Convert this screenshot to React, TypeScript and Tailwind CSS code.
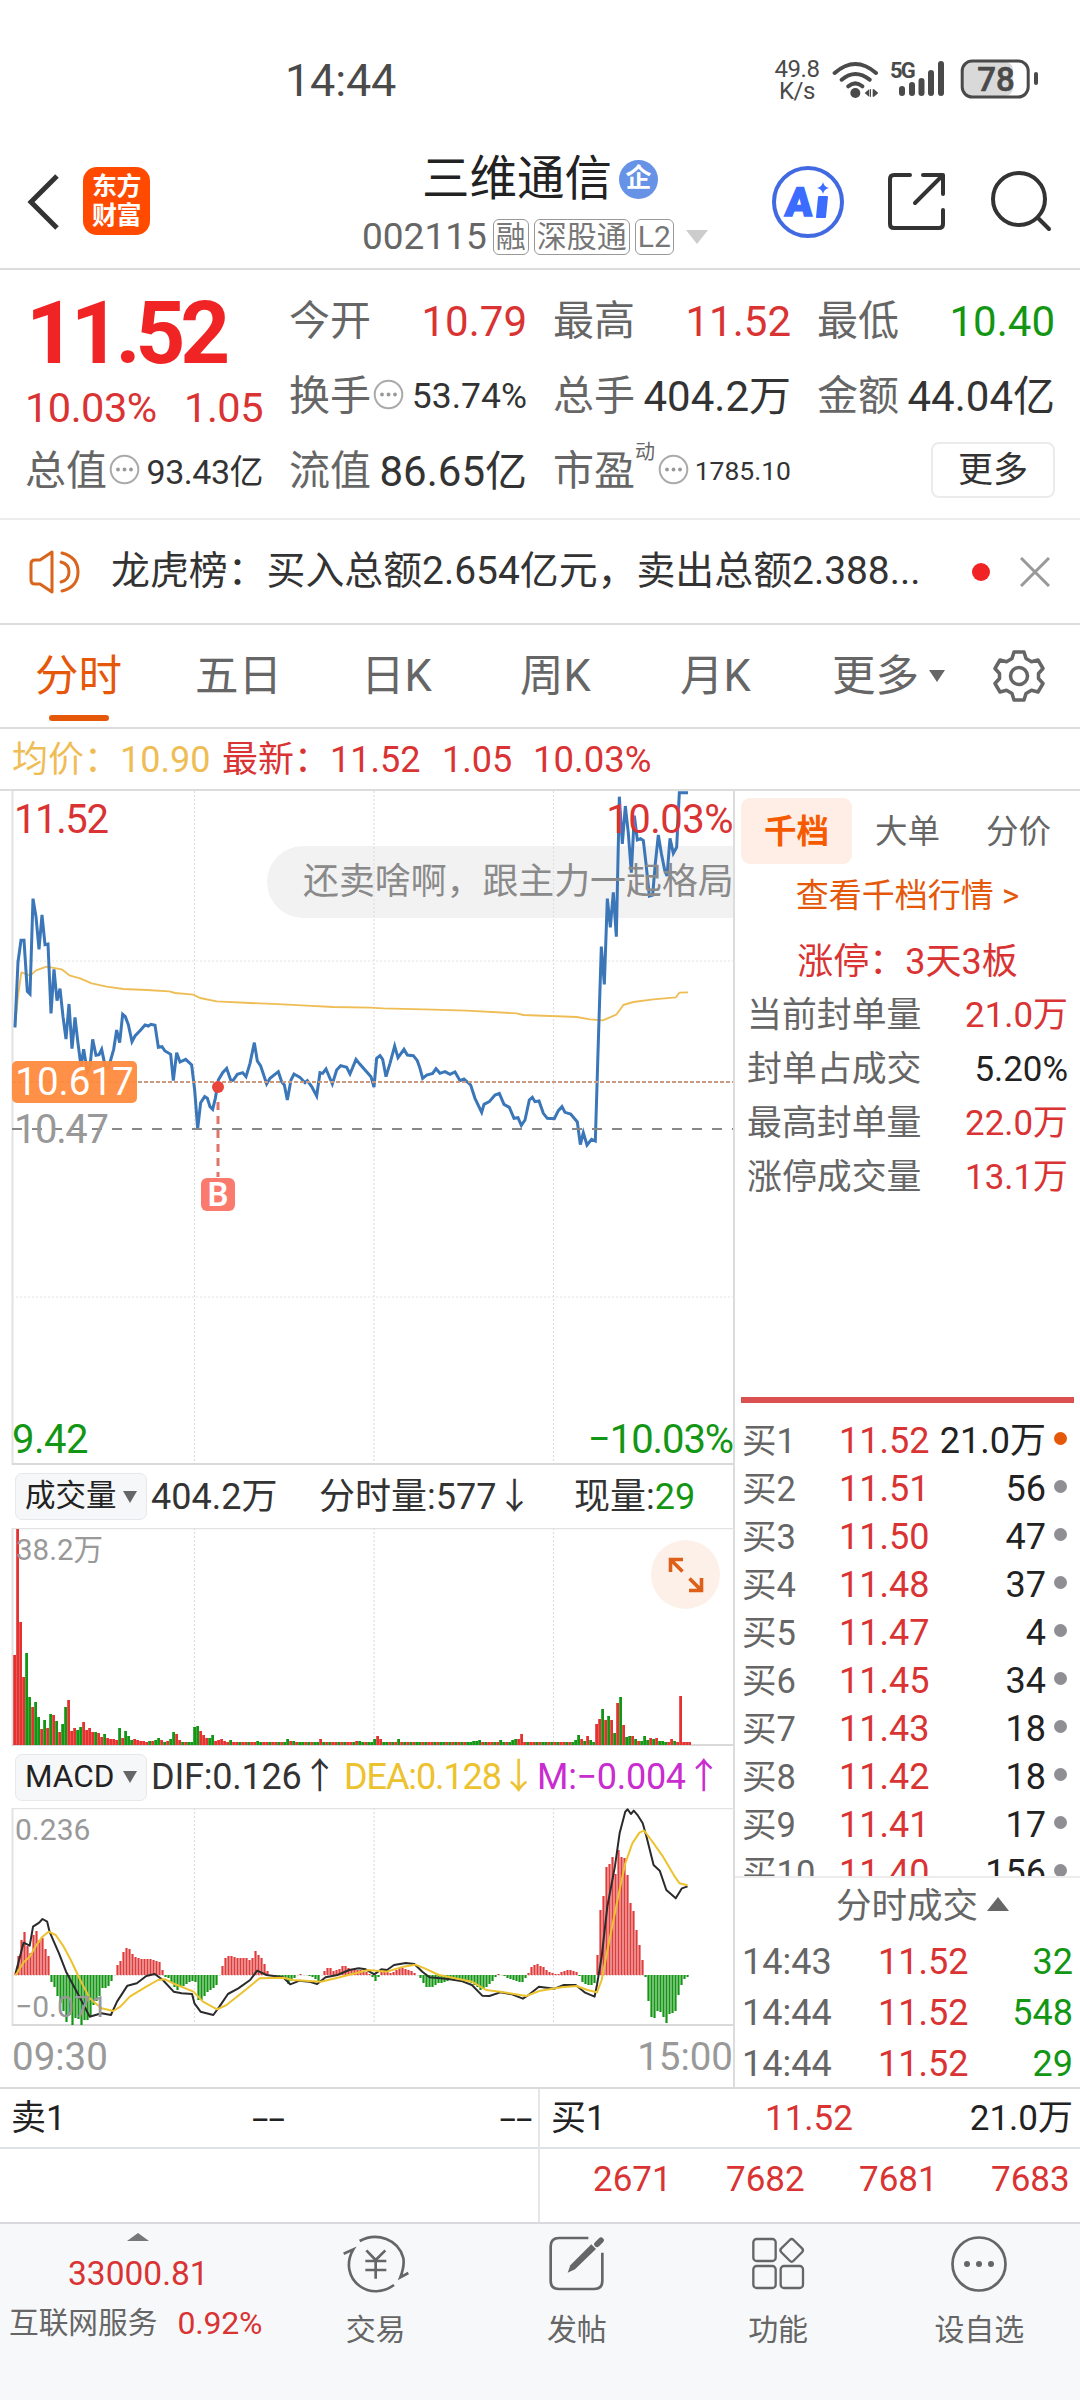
import React from 'react';

const PRICE_LINE =
  '45,772 54,576 63,511 72,511 82,664 90,672 99,386 108,440 117,538 126,435 135,524 144,522 153,730 162,598 171,692 180,656 189,740 198,807 207,702 216,836 225,742 234,820 243,888 251,838 262,905 270,890 278,808 288,856 297,854 305,838 317,896 325,893 332,870 341,838 350,780 359,818 368,733 376,740 385,764 396,815 405,798 420,782 435,765 445,768 453,763 465,766 475,832 486,830 495,843 512,853 520,932 530,848 540,876 557,868 575,885 584,960 593,1076 602,998 614,980 622,985 630,1010 638,1018 646,985 655,930 668,908 680,895 693,933 700,930 712,913 728,908 738,920 750,880 763,818 772,873 782,888 800,942 810,925 835,905 845,935 853,945 862,990 873,930 882,912 900,922 915,938 922,932 935,950 950,978 960,908 968,910 978,897 997,942 1010,900 1022,887 1040,892 1050,912 1068,868 1080,883 1113,920 1122,951 1130,865 1140,857 1148,868 1158,920 1170,880 1184,828 1194,863 1212,838 1222,855 1240,857 1252,872 1260,895 1268,925 1280,915 1298,910 1308,896 1320,910 1335,905 1350,913 1365,906 1380,932 1392,927 1412,945 1425,985 1445,1027 1452,1003 1468,995 1485,975 1498,970 1512,1003 1528,1012 1542,1045 1554,1043 1564,1066 1575,1050 1588,990 1597,982 1605,995 1617,993 1630,1030 1642,1045 1663,1046 1675,1022 1686,1010 1695,1027 1712,1032 1732,1056 1741,1124 1750,1088 1761,1125 1775,1108 1786,1113 1795,815 1804,530 1813,643 1822,386 1831,472 1840,367 1849,500 1858,80 1867,222 1876,108 1885,190 1894,308 1903,137 1912,210 1922,206 1930,212 1938,280 1948,378 1958,375 1966,280 1975,195 1984,250 1994,300 2001,318 2010,205 2020,250 2030,232 2038,68 2064,68';

const AVG_LINE =
  '45,772 54,680 64,607 85,615 95,613 108,601 140,590 185,598 208,616 240,625 275,640 320,650 370,657 440,660 508,664 525,669 580,674 600,684 650,694 750,699 850,703 920,707 1000,711 1110,713 1150,715 1300,719 1400,722 1550,730 1570,735 1730,741 1770,748 1808,751 1830,742 1850,733 1870,705 1900,696 1960,688 2028,682 2038,668 2064,667';

const DIF_LINE =
  '33,700 50,608 63,617 70,560 83,548 90,537 100,545 105,575 112,598 125,640 140,695 155,735 170,775 190,830 215,820 235,825 248,785 270,737 290,730 310,708 328,702 345,720 368,755 385,760 407,762 412,790 425,815 452,825 465,800 483,762 505,745 530,720 545,692 565,705 600,712 615,733 635,722 655,725 672,732 690,712 715,705 740,690 760,685 775,688 793,703 808,688 820,690 835,675 860,669 878,672 895,695 910,712 950,717 980,724 1000,735 1022,767 1037,768 1060,757 1085,763 1108,776 1120,765 1142,740 1175,746 1195,735 1220,735 1240,758 1260,770 1265,735 1275,650 1287,500 1303,380 1313,280 1325,215 1330,208 1337,222 1343,212 1352,227 1362,250 1370,290 1385,375 1398,392 1412,450 1432,475 1445,445 1457,439';

const DEA_LINE =
  '33,706 50,667 63,650 75,620 90,590 103,575 118,585 135,620 150,660 170,720 190,775 215,805 240,813 255,800 275,770 310,740 335,720 350,718 370,732 410,755 430,785 460,808 480,795 520,750 550,715 600,713 620,720 680,725 720,712 780,690 820,695 855,680 880,674 900,685 930,705 975,718 1000,725 1030,750 1060,755 1115,768 1145,752 1190,742 1222,738 1245,750 1265,757 1275,720 1290,610 1310,470 1325,370 1340,310 1355,278 1365,272 1380,300 1405,350 1430,410 1440,430 1457,436';

// minute volume bars: positive is an up minute, negative a down minute
const VOLUME: number[] = [
  90, 216, 123, 68, -92, -48, 38, -43, -28, 16, -25, 17, -31, 30, -24, 13, -21, -38, 45, 14, 17, -15, -18, 23, 15,
  17, 13, -13, 12, 8, -11, 7, 6, 6, 5, -17, 7, -14, -9, -5, 6, 5, 4, 4, 3, -4, 4, -5, -7, 5, -3, 4, -6, -13, 11, 5,
  -3, 3, -3, -3, -18, -19, 14, 10, 7, -7, -10, 4, 5, 6, 4, 3, -5, 3, 3, -3, 3, 3, -3, 3, 3, -4, -3, 3, 3, -3, 3, 3,
  -3, 3, -3, -6, 4, -4, 3, -3, -3, 3, -3, 3, -3, -3, 6, -3, 3, -3, 3, 3, -3, 3, -3, 3, 3, -3, 4, -4, -3, 3, -3, -3,
  -6, 9, 6, -3, -3, 3, -3, 3, -6, 3, -3, 3, -3, 3, -3, -3, 3, -3, 3, 3, -3, 3, -3, -3, 3, -3, 3, -3, 3, -3, 3, -3,
  -3, -4, -4, -5, 3, -3, 3, 3, -3, 3, -5, -3, 3, -3, -5, -6, 6, 11, 3, -3, 3, 3, -3, 3, -3, -3, 3, -3, 3, -3, 3, 3,
  -3, 3, -3, -5, -10, 6, -4, 9, -5, -3, 21, 26, -36, 25, -29, 25, -12, 42, -48, 20, -8, -9, 9, -6, 4, -4, -9, -5, 7,
  -6, 7, -4, -4, -3, 3, 6, -4, 3, 49, 3, 3, 3,
];

const MACD: number[] = [
  2, 19, 35, 43, 29, 22, 40, 44, 35, 37, 26, 19, -7, -12, -21, -28, -36, -47, -40, -50, -43, -44, -50, -45, -45, -42,
  -30, -26, -21, -13, -13, -11, -6, 0, 10, 14, 23, 27, 26, 21, 18, 17, 16, 16, 16, 16, 15, 14, 13, 5, -2, -3, -8,
  -12, -15, -12, -11, -9, -7, -6, -7, -25, -25, -21, -17, -15, -13, -10, 0, 9, 17, 19, 19, 18, 17, 17, 17, 17, 15,
  17, 24, 20, 17, 11, 4, 0, -1, -1, -2, -3, -5, -9, -6, -3, 0, 1, 0, 0, -1, -2, -4, -6, 0, 4, 7, 7, 4, 5, 6, 9, 9,
  7, 6, 6, 5, 5, 4, 3, 1, -2, -6, -2, 3, 5, 3, 2, 3, 5, 7, 7, 6, 5, 4, 2, 0, -3, -8, -12, -12, -12, -10, -8, -8, -7,
  -6, -5, -4, -4, -4, -4, -5, -6, -8, -10, -12, -15, -14, -12, -9, -6, -2, 1, 0, -1, -3, -4, -5, -6, -7, -7, -3, 2, 8,
  10, 11, 9, 8, 5, 3, 2, 1, 1, 3, 4, 5, 5, 4, 3, -1, -7, -9, -10, -10, -8, 20, 65, 79, 108, 111, 118, 101, 125, 118,
  117, 100, 72, 64, 45, 30, 15, -2, -26, -42, -43, -36, -37, -42, -48, -39, -38, -36, -20, -10, -4, -2,
];

const BIDS = [
  ['买1', '11.52', '21.0万'],
  ['买2', '11.51', '56'],
  ['买3', '11.50', '47'],
  ['买4', '11.48', '37'],
  ['买5', '11.47', '4'],
  ['买6', '11.45', '34'],
  ['买7', '11.43', '18'],
  ['买8', '11.42', '18'],
  ['买9', '11.41', '17'],
  ['买10', '11.40', '156'],
];

const TRADES = [
  ['14:43', '11.52', '32'],
  ['14:44', '11.52', '548'],
  ['14:44', '11.52', '29'],
];

const SEALS = [
  { label: '当前封单量', value: '21.0万', red: true },
  { label: '封单占成交', value: '5.20%', red: false },
  { label: '最高封单量', value: '22.0万', red: true },
  { label: '涨停成交量', value: '13.1万', red: true },
];

const StatusBar = () => (
  <div className="h-[125px] flex-none flex items-start text-[#4a4a4a]">
    <span className="ml-[285px] mt-[56px] text-[45px] leading-[50px] w-[121px] tracking-[-0.2px]">14:44</span>
    <div className="ml-[366px] mt-[58px] w-[50px] text-center text-[24px] leading-[22px] tracking-[-0.4px]">
      49.8
      <br />
      K/s
    </div>
    <svg className="mt-[59px] ml-[9px]" width="50" height="42" viewBox="0 0 150 126" fill="none" stroke="#4a4a4a" strokeWidth="12" strokeLinecap="round">
      <path d="M11 42 Q73 -12 135 42M32 62 Q73 28 116 62M52 82 Q73 64 94 82" />
      <circle cx="73" cy="102" r="15" fill="#4a4a4a" stroke="none" />
      <path d="M101 102l13-11v22zM142 102l-13-11v22z" fill="#4a4a4a" stroke="none" />
      <path d="M118 92v20M127 92v20" strokeWidth="4" />
    </svg>
    <div className="relative ml-[8px] mt-[58px] w-[56px] h-[42px]">
      <span className="absolute left-[1px] top-0 text-[22px] leading-[25px] font-bold tracking-[-1.800px]">5G</span>
      <svg width="56" height="42" viewBox="0 0 56 42" stroke="#4a4a4a" strokeWidth="6" strokeLinecap="round">
        <path d="M13 31v4M23 27v8M32.500 23v12M42 15v20M52 6v29" />
      </svg>
    </div>
    <svg className="ml-[14px] mt-[58px]" width="82" height="42" viewBox="0 0 82 42" fill="none">
      <rect x="4" y="4" width="50" height="34" rx="8" fill="#d9d9d9" />
      <rect x="3.200" y="3" width="66" height="36" rx="10" stroke="#4a4a4a" strokeWidth="3" />
      <path d="M77 16v9" stroke="#4a4a4a" strokeWidth="4" strokeLinecap="round" />
      <text x="37" y="32.500" fontSize="33" fontWeight="500" textAnchor="middle" fill="#4a4a4a" stroke="#4a4a4a" strokeWidth=".6">78</text>
    </svg>
  </div>
);

const Tag = ({ children }: { children: React.ReactNode }) => (
  <span className="h-[36px] px-[2px] border-[1.5px] border-[#999] rounded-[6px] text-[30px] leading-[33px] text-[#777] whitespace-nowrap">{children}</span>
);

const Header = () => (
  <header className="h-[145px] flex-none border-b-2 border-[#dcdcdc] flex items-center relative">
    <svg className="ml-[25px] mt-[10px]" width="36" height="60" viewBox="0 0 36 60" fill="none" stroke="#333" strokeWidth="5">
      <path d="M32 4L6 30l26 26" />
    </svg>
    <div className="ml-[22px] mt-[9px] w-[67px] h-[68px] rounded-[14px] bg-[#ff4a00] text-white font-bold text-[25px] leading-[29px] text-center pt-[5px] tracking-[-0.5px]">
      东方
      <br />
      财富
    </div>
    <div className="ml-[212px] mt-[15px] w-[352px] flex flex-col items-start">
      <div className="ml-[60px] flex items-center h-[56px]">
        <span className="text-[47.500px] leading-[56px] text-[#222]">三维通信</span>
        <span className="ml-[7px] w-[39px] h-[39px] rounded-full bg-[#6793e6] text-white text-[26px] leading-[37px] text-center font-bold">企</span>
      </div>
      <div className="flex items-center mt-[10px] gap-[5px]">
        <span className="text-[37px] leading-[40px] text-[#666] mr-[1px]">002115</span>
        <Tag>融</Tag>
        <Tag>深股通</Tag>
        <Tag>L2</Tag>
        <svg className="ml-[7px]" width="22" height="14" viewBox="0 0 22 14"><path d="M0 0h22L11 14z" fill="#ccc" /></svg>
      </div>
    </div>
    <svg className="ml-[57px] mt-[10px]" width="74" height="74" viewBox="0 0 74 74">
      <circle cx="37" cy="37" r="34" fill="none" stroke="#4169e1" strokeWidth="4" />
      <text x="14" y="51" fontSize="40" fontWeight="900" fill="#3b6cff" stroke="#3b6cff" strokeWidth="1.5" transform="skewX(-4) translate(3 0)">A</text>
      <path d="M48 32h8l-2 20h-8z" fill="#3b6cff" stroke="#3b6cff" strokeWidth="2" strokeLinejoin="round" />
      <path d="M52 17q1 5 6 6q-5 1-6 6q-1-5-6-6q5-1 6-6z" fill="#3b6cff" />
    </svg>
    <svg className="ml-[42px] mt-[10px]" width="60" height="60" viewBox="0 0 60 60" fill="none" stroke="#333" strokeWidth="4" strokeLinecap="round" strokeLinejoin="round">
      <path d="M23 3H7Q3 3 3 7V52Q3 56 7 56H52Q56 56 56 52V38M36 3H56V22M55 4L28 31" />
    </svg>
    <svg className="ml-[44px] mt-[9px]" width="62" height="62" viewBox="0 0 62 62" fill="none" stroke="#333" strokeWidth="4" strokeLinecap="round">
      <circle cx="28" cy="29" r="26" />
      <path d="M47 48l11 11" />
    </svg>
  </header>
);

const Dots = () => (
  <svg className="flex-none" width="31" height="31" viewBox="0 0 31 31">
    <circle cx="15.500" cy="15.500" r="13.800" fill="none" stroke="#aaa" strokeWidth="2" />
    <g fill="#999"><circle cx="9" cy="15.500" r="1.900" /><circle cx="15.500" cy="15.500" r="1.900" /><circle cx="22" cy="15.500" r="1.900" /></g>
  </svg>
);

interface StatProps {
  label: string;
  dots?: boolean;
  children: React.ReactNode;
}

const Stat = ({ label, dots, children }: StatProps) => (
  <div className="h-[75px] flex items-center whitespace-nowrap">
    <span className="text-[41px] leading-none text-[#666]">{label}</span>
    {dots && <span className="ml-[2px] mb-[4px]"><Dots /></span>}
    <span className="ml-auto flex items-center">{children}</span>
  </div>
);

const Quote = () => (
  <section className="h-[250px] flex-none border-b-2 border-[#ececec] pl-[25px] pr-[25px] pt-[14px] grid grid-cols-4 gap-x-[26px]">
    <div>
      <div className="h-[98px] pt-[5px] pl-[1px] text-[87px] leading-[88px] font-bold text-[#f02424] tracking-[-5.200px]">11.52</div>
      <div className="h-[52px] flex items-center justify-between text-[41.500px] leading-none text-[#d93333] tracking-[-0.5px]">
        <span>10.03%</span>
        <span>1.05</span>
      </div>
      <Stat label="总值" dots><span className="text-[34px] leading-none text-[#333] tracking-[-0.5px]">93.43亿</span></Stat>
    </div>
    <div>
      <Stat label="今开"><span className="text-[42px] leading-none text-[#d93333]">10.79</span></Stat>
      <Stat label="换手" dots><span className="text-[35.500px] leading-none text-[#333]">53.74%</span></Stat>
      <Stat label="流值"><span className="text-[42px] leading-none text-[#333]">86.65亿</span></Stat>
    </div>
    <div>
      <Stat label="最高"><span className="text-[42px] leading-none text-[#d93333]">11.52</span></Stat>
      <Stat label="总手"><span className="text-[42px] leading-none text-[#333]">404.2万</span></Stat>
      <div className="h-[75px] flex items-center whitespace-nowrap">
        <span className="text-[41px] leading-none text-[#666]">市盈</span>
        <span className="text-[20px] leading-none text-[#666] self-start mt-[8px]">动</span>
        <span className="ml-[3px] mb-[4px]"><Dots /></span>
        <span className="ml-auto text-[26.500px] leading-none text-[#333]">1785.10</span>
      </div>
    </div>
    <div>
      <Stat label="最低"><span className="text-[42px] leading-none text-[#139613]">10.40</span></Stat>
      <Stat label="金额"><span className="text-[42px] leading-none text-[#333]">44.04亿</span></Stat>
      <div className="h-[75px] flex items-center justify-end">
        <button className="w-[124px] h-[56px] mb-[3px] border-2 border-[#ebebeb] rounded-[8px] text-[35px] leading-none text-[#333]">更多</button>
      </div>
    </div>
  </section>
);

const Notice = () => (
  <section className="h-[105px] flex-none border-b-2 border-[#dcdcdc] flex items-center">
    <svg className="ml-[28px]" width="54" height="46" viewBox="0 0 54 46" fill="none" stroke="#d9641c" strokeWidth="3" strokeLinejoin="round" strokeLinecap="round">
      <path d="M24 3L12 11H7Q3 11 3 15V31Q3 35 7 35H12L24 43zM33 13Q41 15 41 23T33 33M34 4Q50 8 50 23T34 42" />
    </svg>
    <span className="ml-[29px] w-[816px] text-[38.900px] leading-none text-[#333] whitespace-nowrap">龙虎榜：买入总额2.654亿元，卖出总额2.388...</span>
    <span className="ml-[45px] w-[18px] h-[18px] rounded-full bg-[#f02424]"></span>
    <svg className="ml-[30px]" width="30" height="30" viewBox="0 0 30 30" stroke="#999" strokeWidth="3">
      <path d="M1 1l28 28M29 1L1 29" />
    </svg>
  </section>
);

const Tabs = () => (
  <nav className="h-[104px] flex-none border-b-2 border-[#dcdcdc] flex items-center text-[43.500px] leading-none text-[#666] pl-[35px]">
    <div className="w-[160px] h-full relative flex items-center pt-[2px] text-[#e5580a]">
      分时
      <span className="absolute left-[14px] top-[90px] w-[60px] h-[6px] rounded-full bg-[#e5580a]"></span>
    </div>
    <span className="w-[166px] pt-[2px]">五日</span>
    <span className="w-[159px] pt-[2px]">日K</span>
    <span className="w-[160px] pt-[2px]">周K</span>
    <span className="w-[152px] pt-[2px]">月K</span>
    <span className="w-[97px] pt-[2px]">更多</span>
    <svg width="16" height="12" viewBox="0 0 16 12"><path d="M0 0h16L8 12z" fill="#666" /></svg>
    <svg className="ml-[48px]" width="52" height="54" viewBox="0 0 52 54" fill="none" stroke="#666" strokeWidth="3.500" strokeLinejoin="round">
      <path d="M21 3H31L33 9.500L38.500 12.700L45 11L50 19.500L45.500 24.500V29.500L50 34.500L45 43L38.500 41.300L33 44.500L31 51H21L19 44.500L13.500 41.300L7 43L2 34.500L6.500 29.500V24.500L2 19.500L7 11L13.500 12.700L19 9.500Z" />
      <circle cx="26" cy="27" r="8.500" />
    </svg>
  </nav>
);

const Grid = ({ height }: { height: number }) => (
  <g stroke="#dedede" strokeWidth="1.200" strokeDasharray="2 2">
    <path d={`M194.500 0V${height}M374 0V${height}M553.500 0V${height}`} />
  </g>
);

const PriceChart = () => (
  <div className="relative h-[674px] overflow-hidden text-[40px] leading-[44px]">
    <svg width="734" height="674" viewBox="0 0 734 674" fill="none">
      <path d="M12.500 0V674" stroke="#e2e2e2" strokeWidth="2" />
      <path d="M12 673H734" stroke="#d9d9d9" strokeWidth="2" />
      <path d="M303 55H734V127H303a36 36 0 0 1 0-72z" fill="#f2f2f2" />
      <Grid height={672} />
      <path d="M12 170H734M12 506H734" stroke="#e4e4e4" strokeWidth="1.200" strokeDasharray="2 2" />
      <g transform="translate(0 -21) scale(.33333)" strokeLinejoin="round">
        <polyline points={AVG_LINE} stroke="#efbd55" strokeWidth="5.500" />
        <polyline points={PRICE_LINE} stroke="#3a76b8" strokeWidth="9" strokeLinejoin="miter" />
      </g>
      <path d="M12 291H734" stroke="#c99a80" strokeWidth="1.800" strokeDasharray="4 2" />
      <path d="M12 338H734" stroke="#888" strokeWidth="2" strokeDasharray="10 10" />
      <circle cx="218" cy="296" r="6" fill="#e8453c" />
      <path d="M218 311V386" stroke="#e07468" strokeWidth="3" strokeDasharray="8 6" />
      <rect x="201" y="387" width="34" height="33" rx="6" fill="#fa7b6d" />
      <text x="218" y="415" fontSize="33" fontWeight="600" textAnchor="middle" fill="#fff">B</text>
    </svg>
    <span className="absolute left-[14px] top-[7px] text-[#d93333] tracking-[-1.400px]">11.52</span>
    <span className="absolute right-0 top-[7px] text-[#d93333] tracking-[-0.5px]">10.03%</span>
    <span className="absolute left-[303px] top-[69px] text-[35.900px] text-[#8a8a8a] whitespace-nowrap">还卖啥啊，跟主力一起格局</span>
    <span className="absolute left-[12px] top-[270px] w-[125px] h-[42px] rounded-[5px] bg-[#ff8a3d]/95 text-center text-[38.500px] leading-[42px] text-white">10.617</span>
    <span className="absolute left-[14px] top-[317px] text-[#999] tracking-[-1.400px]">10.47</span>
    <span className="absolute left-[12px] top-[627px] text-[#139613] tracking-[-0.500px]">9.42</span>
    <span className="absolute right-0 top-[627px] text-[#139613] tracking-[-1.100px]">−10.03%</span>
  </div>
);

const Chip = ({ children }: { children: React.ReactNode }) => (
  <span className="flex-none ml-[15px] mr-[4px] w-[132px] h-[47px] rounded-[7px] border border-[#e6e8ec] bg-[#f6f7f9] flex items-center justify-between pl-[9px] pr-[9px] text-[30.500px] leading-none text-[#222]">
    {children}
    <svg width="14" height="12" viewBox="0 0 14 12"><path d="M0 0h14L7 12z" fill="#666" /></svg>
  </span>
);

const VolumeChart = () => (
  <div className="relative h-[218px] text-[#999]">
    <svg width="734" height="218" viewBox="0 0 734 218" fill="none">
      <path d="M12 .5H734" stroke="#e2e2e2" strokeWidth="1.500" />
      <path d="M12.500 0V218" stroke="#e2e2e2" strokeWidth="2" />
      <path d="M12 217H734" stroke="#d9d9d9" strokeWidth="2" />
      <Grid height={216} />
      {VOLUME.map((v, i) => (
        <rect key={i} x={13.2 + i * 3} y={217 - Math.abs(v)} width="2.8" height={Math.abs(v)} fill={v > 0 ? '#e3322f' : '#139613'} />
      ))}
    </svg>
    <span className="absolute left-[16px] top-[6px] text-[29.500px] leading-[32px]">38.2万</span>
    <span className="absolute right-[13px] top-[12px] w-[69px] h-[69px] rounded-full bg-[#fdf0e9] flex items-center justify-center">
      <svg width="36" height="36" viewBox="0 0 36 36" fill="none" stroke="#dd5f18" strokeWidth="3.600">
        <path d="M2.500 15V2.500H15M3 3L14.500 14.500M33.500 21V33.500H21M33 33L21.500 21.500" />
      </svg>
    </span>
  </div>
);

const MacdChart = () => (
  <div className="relative h-[219px] text-[#999] text-[30px] leading-[32px]">
    <svg width="734" height="219" viewBox="0 0 734 219" fill="none">
      <path d="M12 .5H734" stroke="#e2e2e2" strokeWidth="1.500" />
      <path d="M12.500 0V218" stroke="#e2e2e2" strokeWidth="2" />
      <path d="M12 217H734" stroke="#d9d9d9" strokeWidth="2" />
      <path d="M12 167.500H689" stroke="#e6d9d9" strokeWidth="1" strokeDasharray="2 1" />
      <Grid height={216} />
      {MACD.map((v, i) => (
        <rect key={i} x={14.4 + i * 3} y={v > 0 ? 167 - v : 167} width="2.2" height={Math.abs(v)} fill={v > 0 ? '#e03c3c' : '#139613'} />
      ))}
      <g transform="translate(0 -68) scale(.4719 .33333)" strokeWidth="2" strokeLinejoin="round">
        <polyline points={DIF_LINE} stroke="#2b2b2b" vectorEffect="non-scaling-stroke" />
        <polyline points={DEA_LINE} stroke="#ecc22e" vectorEffect="non-scaling-stroke" />
      </g>
    </svg>
    <span className="absolute left-[15px] top-[6px]">0.236</span>
    <span className="absolute left-[15px] top-[183px]">−0.071</span>
  </div>
);

const ChartColumn = () => (
  <div className="w-[735px] flex-none border-r-2 border-[#dcdcdc]">
    <PriceChart />
    <div className="h-[63px] flex items-center text-[36px] leading-none text-[#333] whitespace-nowrap">
      <Chip>成交量</Chip>
      <span className="w-[168px]">404.2万</span>
      <span className="w-[255px]">分时量:577↓</span>
      <span>现量:<span className="text-[#139613]">29</span></span>
    </div>
    <VolumeChart />
    <div className="h-[62px] flex items-center text-[36px] leading-none whitespace-nowrap">
      <Chip><span className="text-[31.500px]">MACD</span></Chip>
      <span className="w-[193px] text-[#333] tracking-[-0.2px]">DIF:0.126↑</span>
      <span className="w-[193px] text-[#ecc22e] tracking-[-1.100px]">DEA:0.128↓</span>
      <span className="text-[#c92ccf] tracking-[-0.3px]">M:−0.004↑</span>
    </div>
    <MacdChart />
    <div className="h-[60px] flex items-center justify-between pl-[12px] text-[38.500px] leading-none text-[#999]">
      <span>09:30</span>
      <span>15:00</span>
    </div>
  </div>
);

const BookColumn = () => (
  <div className="flex-1 flex flex-col">
    <div className="h-[72px] flex-none pt-[7px] pl-[6px] flex text-[32.500px] leading-none text-[#666]">
      <span className="w-[111px] h-[66px] rounded-[9px] bg-[#ffeee6] text-[#f55a00] font-bold flex items-center justify-center pt-[2px]">千档</span>
      <span className="w-[111px] h-[66px] flex items-center justify-center pt-[2px]">大单</span>
      <span className="w-[111px] h-[66px] flex items-center justify-center pt-[2px]">分价</span>
    </div>
    <div className="h-[64px] flex-none flex items-center justify-center text-[33px] leading-none text-[#e5580a]">查看千档行情 &gt;</div>
    <div className="h-[61px] flex-none flex items-center justify-center text-[36px] leading-none text-[#d93333] pt-[9px]">涨停：3天3板</div>
    {SEALS.map((s) => (
      <div key={s.label} className="h-[54px] flex-none flex items-center justify-between pl-[12px] pr-[12px] pt-[2px] text-[34.900px] leading-none text-[#666]">
        <span>{s.label}</span>
        <span className={s.red ? 'text-[#d93333]' : 'text-[#222]'}>{s.value}</span>
      </div>
    ))}
    <div className="h-[6px] flex-none mt-[193px] ml-[6px] mr-[6px] bg-[#d9504f]"></div>
    <div className="h-[475px] flex-none pt-[14px] overflow-hidden border-b-2 border-[#ececec]">
      {BIDS.map(([level, price, qty], i) => (
        <div key={level} className="h-[48px] flex items-center pl-[7px] text-[36px] leading-none">
          <span className="w-[97px] text-[34.500px] text-[#666]">{level}</span>
          <span className="w-[90px] text-[#d93333]">{price}</span>
          <span className="w-[117px] text-right text-[#222] whitespace-nowrap">{qty}</span>
          <span className={`ml-[8px] mb-[5px] w-[13px] h-[13px] rounded-full ${i === 0 ? 'bg-[#e5580a]' : 'bg-[#8e8e93]'}`}></span>
        </div>
      ))}
    </div>
    <div className="h-[58px] flex-none flex items-center pl-[101px] text-[35.500px] leading-none text-[#666]">
      分时成交
      <svg className="ml-[9px] mb-[6px]" width="22" height="14" viewBox="0 0 22 14"><path d="M0 14h22L11 0z" fill="#666" /></svg>
    </div>
    {TRADES.map(([time, price, qty], i) => (
      <div key={i} className="h-[51px] flex-none flex items-center pl-[7px] pr-[7px] text-[36px] leading-none">
        <span className="w-[136px] text-[#666]">{time}</span>
        <span className="text-[#d93333]">{price}</span>
        <span className="ml-auto text-[#139613]">{qty}</span>
      </div>
    ))}
  </div>
);

const OrderStrip = () => (
  <section className="h-[137px] flex-none border-t-2 border-b-2 border-[#d8dadd] grid grid-cols-2 text-[35px] leading-none text-[#222]">
    <div className="border-r-2 border-[#e4e6e8]">
      <div className="h-[60px] border-b-2 border-[#dfe2e4] flex items-center pl-[11px] pr-[6px]">
        <span className="w-[241px]">卖1</span>
        <span className="scale-x-[1.7] origin-left">--</span>
        <span className="ml-auto scale-x-[1.7] origin-right">--</span>
      </div>
    </div>
    <div>
      <div className="h-[60px] border-b-2 border-[#dfe2e4] flex items-center pl-[11px] pr-[7px]">
        <span className="w-[214px]">买1</span>
        <span className="text-[#d93333]">11.52</span>
        <span className="ml-auto">21.0万</span>
      </div>
      <div className="h-[60px] flex items-center pl-[53px] text-[#d93333]">
        <span className="w-[133px]">2671</span>
        <span className="w-[133px]">7682</span>
        <span className="w-[132px]">7681</span>
        <span>7683</span>
      </div>
    </div>
  </section>
);

interface NavItemProps {
  icon: React.ReactNode;
  label: string;
}

const NavItem = ({ icon, label }: NavItemProps) => (
  <button className="flex-1 flex flex-col items-center pt-[8px] text-[30px] leading-none text-[#666]">
    {icon}
    <span className="mt-[19px]">{label}</span>
  </button>
);

const BottomNav = () => (
  <nav className="flex-1 bg-[#f7f8fa] flex">
    <div className="w-[275px] flex flex-col items-start">
      <svg className="ml-[127px] mt-[9px]" width="22" height="8" viewBox="0 0 22 8"><path d="M0 8h22L11 0z" fill="#777" /></svg>
      <span className="ml-[68px] mt-[15px] text-[33.500px] leading-[36px] text-[#d93333]">33000.81</span>
      <div className="ml-[9px] mt-[15px] flex items-center text-[29.700px] leading-[32px] text-[#666] whitespace-nowrap">
        互联网服务
        <span className="ml-[20px] text-[32px] text-[#d93333] tracking-[-0.2px]">0.92%</span>
      </div>
    </div>
    <NavItem
      label="交易"
      icon={
        <svg width="68" height="64" viewBox="35 22 204 192" fill="none" stroke="#666" strokeWidth="8">
          <path d="M88 49C140 20 205 45 219 100Q223 125 210 158L234 145M40 87L69 74C45 115 55 160 88 184C118 206 158 205 191 181" />
          <path d="M108 77L136 106L165 77M105 109H168M105 136H168M136 106V162" />
        </svg>
      }
    />
    <NavItem
      label="发帖"
      icon={
        <svg width="64" height="64" viewBox="646 22 192 192" fill="none" stroke="#666" strokeWidth="8">
          <path d="M776 40H688Q663 40 663 65V168Q663 193 688 193H793Q818 193 818 168V84" />
          <path d="M714 144L722 122L785 59L799 73L736 134Z" fill="#666" stroke="none" />
          <path d="M802 59L814 47" strokeWidth="17" strokeLinecap="round" />
        </svg>
      }
    />
    <NavItem
      label="功能"
      icon={
        <svg width="64" height="64" viewBox="1248 22 192 192" fill="none" stroke="#666" strokeWidth="7">
          <rect x="1270" y="43" width="67" height="66" rx="10" />
          <rect x="1270" y="124" width="67" height="66" rx="10" />
          <rect x="1352" y="124" width="67" height="66" rx="10" />
          <rect x="1359" y="51" width="52" height="52" rx="8" transform="rotate(45 1385 77)" />
        </svg>
      }
    />
    <NavItem
      label="设自选"
      icon={
        <svg width="64" height="64" viewBox="0 0 64 64">
          <circle cx="32" cy="32" r="26.500" fill="none" stroke="#666" strokeWidth="2.700" />
          <g fill="#666"><circle cx="20" cy="32" r="3" /><circle cx="32" cy="32" r="3" /><circle cx="44" cy="32" r="3" /></g>
        </svg>
      }
    />
  </nav>
);

export default function App() {
  return (
    <div lang="zh-CN" className="w-[1080px] h-[2400px] bg-white flex flex-col overflow-hidden font-['Roboto','Noto_Sans_CJK_SC',sans-serif]">
      <StatusBar />
      <Header />
      <Quote />
      <Notice />
      <Tabs />
      <div className="h-[62px] flex-none border-b-2 border-[#dcdcdc] flex items-center pl-[12px] pt-[2px] text-[36px] leading-none text-[#d93333] whitespace-nowrap">
        <span className="w-[108px] text-[#efbd55]">均价：</span>
        <span className="w-[102px] text-[#efbd55]">10.90</span>
        <span className="w-[108px]">最新：</span>
        <span className="w-[112px]">11.52</span>
        <span className="w-[91px]">1.05</span>
        <span className="text-[36.500px]">10.03%</span>
      </div>
      <div className="h-[1296px] flex-none flex">
        <ChartColumn />
        <BookColumn />
      </div>
      <OrderStrip />
      <BottomNav />
    </div>
  );
}
